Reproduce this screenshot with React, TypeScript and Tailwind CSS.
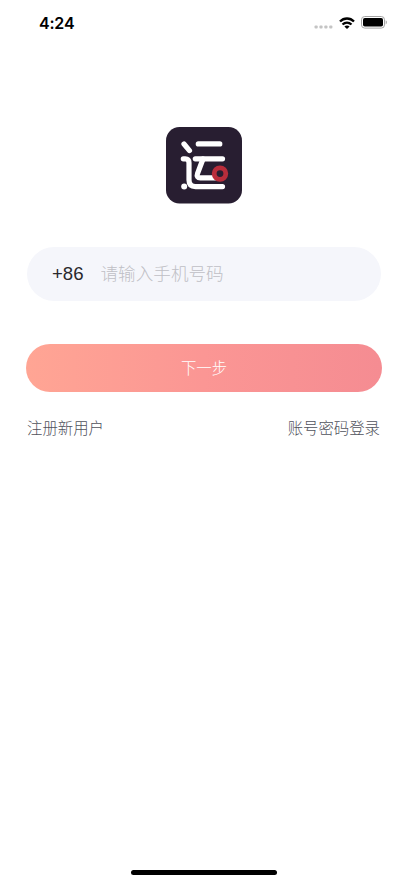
function StatusBar() {
    return (
        <div className="flex h-[45px] items-center justify-between pl-[39px] pr-[20px]">
            <span className="font-['Inter','Liberation_Sans',sans-serif] text-[16px] font-semibold leading-none tracking-[-0.2px] text-black">4:24</span>
            <div className="flex items-center">
                <svg className="mr-[5px] mt-[8px]" width="20" height="4" viewBox="0 0 20 4" fill="#c4c4c4">
                    <rect x="0.5" y="0.5" width="3.2" height="3" rx="1" />
                    <rect x="5.4" y="0.5" width="3.2" height="3" rx="1" />
                    <rect x="10.3" y="0.5" width="3.2" height="3" rx="1" />
                    <rect x="15.2" y="0.5" width="3.2" height="3" rx="1" />
                </svg>
                <svg className="mr-[6px]" width="16" height="12" viewBox="0 0 16 12" fill="none" stroke="#000" strokeWidth="2.3">
                    <path d="M1 4.5C5 .5 11 .5 15 4.5" />
                    <path d="M3.5 7.5c2.6-2.4 6.4-2.4 9 0" />
                    <path d="M8 12 5.4 9.5c1.4-1.4 3.8-1.4 5.2 0z" fill="#000" stroke="none" />
                </svg>
                <svg width="27" height="13" viewBox="0 0 27 13">
                    <rect x="0.5" y="0.5" width="23" height="11.6" rx="3.2" fill="none" stroke="#a3a3a3" />
                    <rect x="2" y="2" width="20" height="8.6" rx="1.8" fill="#000" />
                    <path d="M24.7 4.2c1.6.6 1.6 3.6 0 4.2z" fill="#a3a3a3" />
                </svg>
            </div>
        </div>
    );
}

function Logo() {
    return (
        <svg className="mx-auto mt-[82px]" width="76" height="77" viewBox="0 0 76 77" fill="none" strokeLinecap="round" strokeLinejoin="round">
            <rect width="76" height="76.5" rx="13.5" fill="#281e31" />
            <g stroke="#fff" strokeWidth="5.2">
                <path d="M18 17l5.5 6.6" />
                <path d="M32.3 16.9h21.5" />
                <path d="M29.3 31.8h27.2" />
                <path d="M37 32l-5.5 14.6c-1 2.7.2 4.2 2.8 4.2h15" />
                <path d="M17.3 31.8h1.9c2.6 0 3.8 1.3 3.8 3.9v17.3c0 4.4 2.1 6.6 6.5 6.6h27" />
            </g>
            <circle cx="18.2" cy="59.6" r="3" fill="#fff" />
            <circle cx="54" cy="46.6" r="5.8" stroke="#b92d3b" strokeWidth="4.8" fill="#281e31" />
        </svg>
    );
}

export default function App() {
    return (
        <div className="flex h-[883px] w-full flex-col bg-white font-['Noto_Sans_CJK_SC',sans-serif]">
            <StatusBar />
            <Logo />

            <div className="mx-[27px] mt-[43px] flex h-[54px] items-center rounded-full bg-[#f5f6fb] pl-[25px]">
                <span className="w-[48.5px] font-['Liberation_Sans',sans-serif] text-[18.6px] text-[#29292d]">+86</span>
                <input
                    type="tel"
                    className="min-w-0 flex-1 bg-transparent pb-[2px] text-[17.6px] font-light text-[#29292d] outline-none placeholder:text-[#bfbfc5]"
                    placeholder="请输入手机号码"
                />
            </div>

            <button className="mx-[26px] mt-[43px] h-[48px] rounded-full bg-linear-to-r from-[#ffa594] via-[#fb9694] to-[#f58c92] text-[15.4px] font-light text-white">
                下一步
            </button>

            <div className="mx-[27px] mt-[23px] flex justify-between pr-px text-[15.4px] font-light leading-[24px] text-[#50525c]">
                <a>注册新用户</a>
                <a>账号密码登录</a>
            </div>

            <div className="mx-auto mb-[8px] mt-auto h-[5px] w-[146px] rounded-full bg-black"></div>
        </div>
    );
}
